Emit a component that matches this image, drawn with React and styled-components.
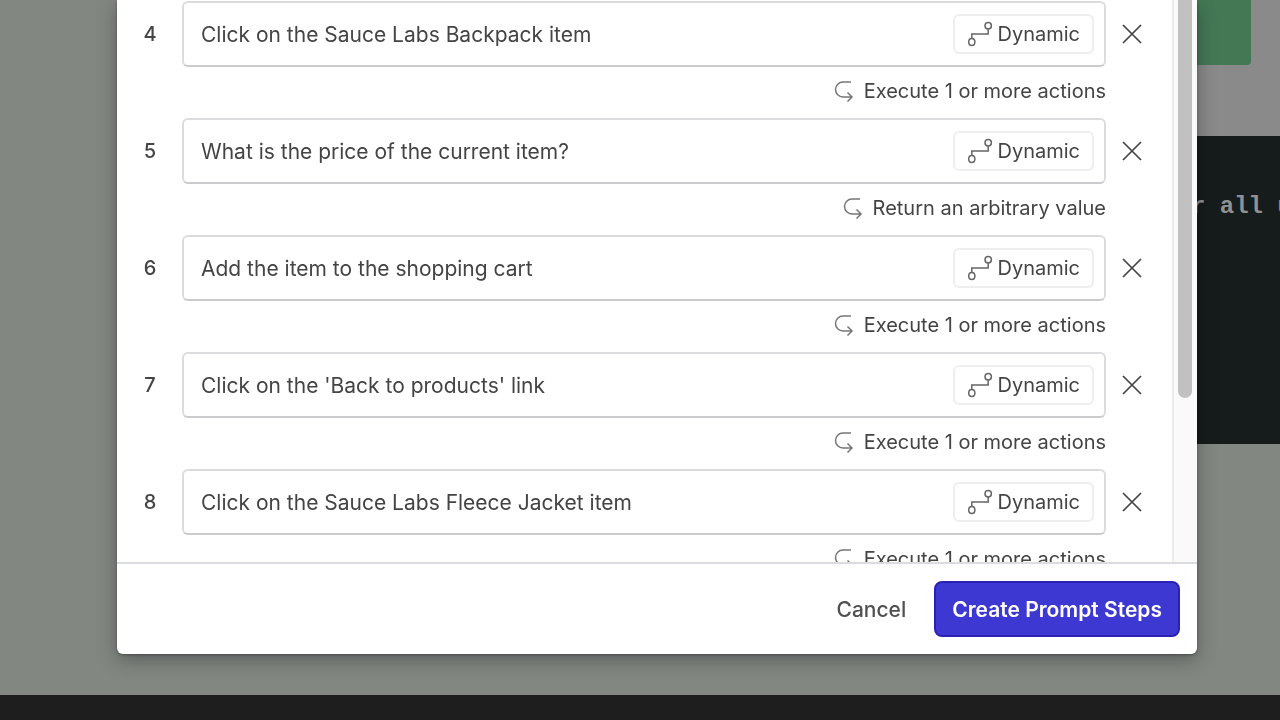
import React, { useState } from 'react';
import styled, { createGlobalStyle } from 'styled-components';

const GlobalStyle = createGlobalStyle`
  * {
    box-sizing: border-box;
  }

  body {
    margin: 0;
    overflow: hidden;
    font-family: Inter, 'Liberation Sans', sans-serif;
    color: #444;
  }

  button, input {
    font: inherit;
    color: inherit;
  }
`;

const Page = styled.div`
  display: flex;
  flex-direction: column;
  height: 100vh;
`;

const Workspace = styled.main`
  display: flex;
  flex: 1;
  justify-content: flex-end;
  background: #828782;
`;

const SidePanel = styled.section`
  width: 100px;
`;

const PanelHeader = styled.div`
  height: 136px;
  padding-right: 29px;
  background: #8b8a8b;
`;

const StatusBlock = styled.div`
  height: 65px;
  border-radius: 0 0 4px 4px;
  background: #447855;
`;

const CodeBlock = styled.pre`
  height: 308px;
  margin: 0;
  padding: 57px 0 0 11px;
  overflow: hidden;
  background: #161c1b;
  color: #8f9192;
  font: bold 24px/28px 'Liberation Mono', monospace;
`;

const StatusBar = styled.footer`
  height: 25px;
  background: #1e1e1e;
`;

const Overlay = styled.div`
  position: fixed;
  top: 0;
  left: 0;
  z-index: 10;
  display: flex;
  width: 100%;
  height: 100%;
  padding: 0 83px 66px 117px;
`;

const Modal = styled.div`
  display: flex;
  flex: 1;
  flex-direction: column;
  min-width: 0;
  border-radius: 0 0 6px 6px;
  background: white;
  box-shadow: 0 6px 20px rgba(0, 0, 0, 0.3), 0 1px 3px rgba(0, 0, 0, 0.3);
`;

const ModalBody = styled.div`
  display: flex;
  flex: 1;
  min-height: 0;
  overflow: hidden;
`;

const StepList = styled.ol`
  flex: 1;
  margin: 0;
  padding: 1px 28px 0 15px;
  list-style: none;
`;

const Step = styled.li`
  display: grid;
  grid-template-columns: 36px 1fr 24px;
  grid-template-rows: 66px 48px;
  column-gap: 14px;
  align-items: center;
  margin-bottom: 3px;
`;

const StepNumber = styled.label`
  text-align: center;
  font-size: 20px;
  font-weight: 500;
`;

const StepField = styled.div`
  display: flex;
  align-items: center;
  height: 66px;
  padding: 0 10px 0 17px;
  border: 2px solid #dcdcde;
  border-bottom-color: #cbcbcd;
  border-radius: 6px;
`;

const StepInput = styled.input`
  flex: 1;
  min-width: 0;
  padding: 0;
  border: 0;
  outline: 0;
  background: none;
  font-size: 21px;
`;

const TypeButton = styled.button`
  display: flex;
  align-items: center;
  gap: 4px;
  height: 40px;
  padding: 0 12px;
  border: 2px solid #eeeeef;
  border-radius: 6px;
  background: white;
  font-size: 20px;
  cursor: pointer;
`;

const RemoveButton = styled.button`
  display: flex;
  align-items: center;
  justify-content: center;
  height: 34px;
  padding: 0;
  border: 0;
  background: none;
  cursor: pointer;
`;

const StepResult = styled.div`
  display: flex;
  grid-column: 2;
  align-items: center;
  justify-content: flex-end;
  gap: 10px;
  font-size: 20px;
  line-height: 24px;
`;

const ScrollTrack = styled.div`
  width: 25px;
  border-left: 2px solid #ebebeb;
  background: #fafafa;
`;

const ScrollThumb = styled.div`
  width: 14px;
  height: 398px;
  margin-left: 4px;
  border-radius: 0 0 7px 7px;
  background: #c1c1c1;
`;

const ModalFooter = styled.div`
  display: flex;
  align-items: center;
  justify-content: flex-end;
  gap: 12px;
  height: 92px;
  padding: 0 17px;
  border-top: 2px solid #dadce0;
`;

const FooterButton = styled.button`
  height: 56px;
  padding: 0 ${({ $primary }) => ($primary ? '16px' : '14px')};
  border: 2px solid ${({ $primary }) => ($primary ? '#2a22b4' : 'transparent')};
  border-radius: 8px;
  background: ${({ $primary }) => ($primary ? '#3d38d1' : 'none')};
  color: ${({ $primary }) => ($primary ? 'white' : '#505050')};
  font-size: 21px;
  font-weight: ${({ $primary }) => ($primary ? 600 : 500)};
  cursor: pointer;
`;

const RouteIcon = () => (
  <svg width="26" height="26" viewBox="0 0 26 26" fill="none" stroke="#666" strokeWidth="1.5">
    <ellipse cx="4.8" cy="21" rx="3.1" ry="3.5" />
    <circle cx="21.2" cy="4.8" r="3.2" />
    <path d="M4.800 17.500V13h16.400V8" />
  </svg>
);

const ReturnIcon = () => (
  <svg width="20" height="22" viewBox="0 0 20 22" fill="none" stroke="#777" strokeWidth="1.5">
    <path d="M17 2H9a7 7 0 0 0 0 15h9M13.500 12.500l4.500 4.500l-4.500 4.500" />
  </svg>
);

const CloseIcon = () => (
  <svg width="20" height="20" viewBox="0 0 20 20" fill="none" stroke="#444" strokeWidth="1.7">
    <path d="M1 1l18 18M19 1l-18 18" />
  </svg>
);

const ACTIONS = 'Execute 1 or more actions';

const initialSteps = [
  { id: 4, prompt: 'Click on the Sauce Labs Backpack item', result: ACTIONS },
  { id: 5, prompt: 'What is the price of the current item?', result: 'Return an arbitrary value' },
  { id: 6, prompt: 'Add the item to the shopping cart', result: ACTIONS },
  { id: 7, prompt: "Click on the 'Back to products' link", result: ACTIONS },
  { id: 8, prompt: 'Click on the Sauce Labs Fleece Jacket item', result: ACTIONS },
];

export default function App() {
  const [steps, setSteps] = useState(initialSteps);

  const changePrompt = (id, prompt) => {
    setSteps(steps.map((step) => (step.id === id ? { ...step, prompt } : step)));
  };

  const removeStep = (id) => {
    setSteps(steps.filter((step) => step.id !== id));
  };

  return (
    <>
      <GlobalStyle />
      <Page>
        <Workspace>
          <SidePanel>
            <PanelHeader>
              <StatusBlock />
            </PanelHeader>
            <CodeBlock>r all u</CodeBlock>
          </SidePanel>
        </Workspace>
        <StatusBar />
      </Page>
      <Overlay>
        <Modal role="dialog">
          <ModalBody>
            <StepList>
              {steps.map(({ id, prompt, result }) => (
                <Step key={id}>
                  <StepNumber htmlFor={`step-${id}`}>{id}</StepNumber>
                  <StepField>
                    <StepInput
                      id={`step-${id}`}
                      value={prompt}
                      onChange={(e) => changePrompt(id, e.target.value)}
                    />
                    <TypeButton type="button">
                      <RouteIcon />
                      Dynamic
                    </TypeButton>
                  </StepField>
                  <RemoveButton type="button" aria-label="Remove" onClick={() => removeStep(id)}>
                    <CloseIcon />
                  </RemoveButton>
                  <StepResult>
                    <ReturnIcon />
                    {result}
                  </StepResult>
                </Step>
              ))}
            </StepList>
            <ScrollTrack>
              <ScrollThumb />
            </ScrollTrack>
          </ModalBody>
          <ModalFooter>
            <FooterButton type="button">Cancel</FooterButton>
            <FooterButton type="button" $primary>Create Prompt Steps</FooterButton>
          </ModalFooter>
        </Modal>
      </Overlay>
    </>
  );
}
